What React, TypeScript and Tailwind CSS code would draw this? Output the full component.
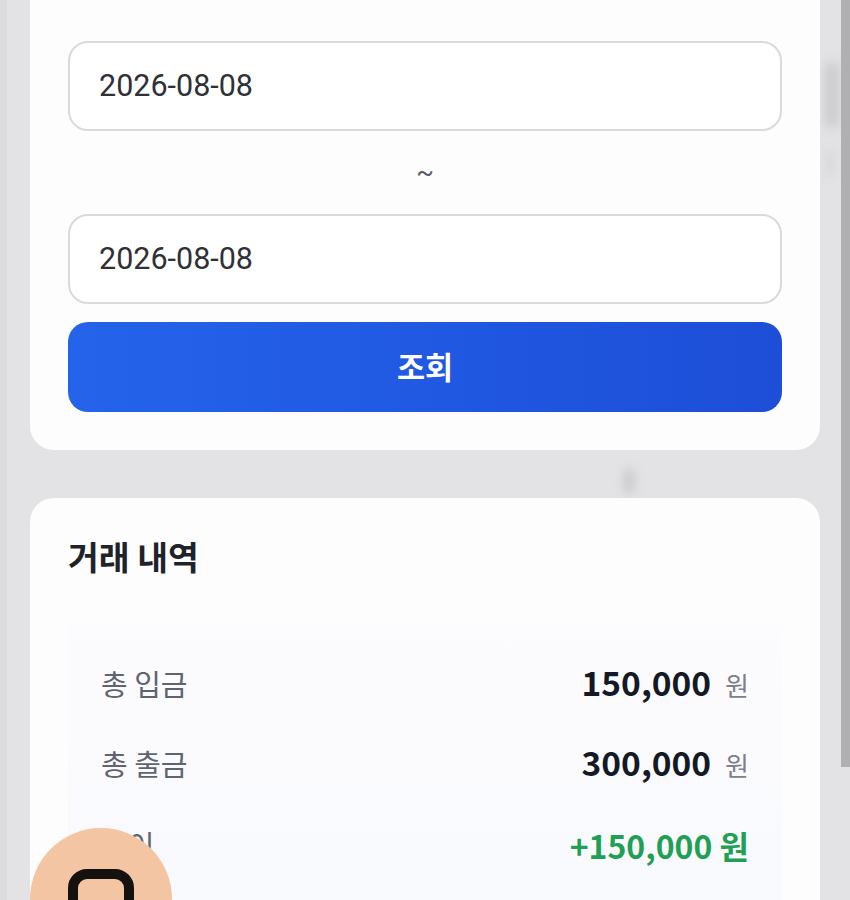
const cjk = "font-['Noto_Sans_CJK_KR','Noto_Sans',sans-serif]";

function DateInput() {
  return (
    <input
      readOnly
      value="2026-08-08"
      className="h-[90px] w-full rounded-[20px] border-2 border-[#d9d9de] bg-white px-[29px] pb-[2px] font-['Roboto',sans-serif] text-[30.5px] text-[#2f3136] outline-none"
    />
  );
}

function Row({ label, amount }: { label: string; amount: string }) {
  return (
    <div className="flex h-[80px] items-center justify-between">
      <span className="text-[29px] text-[#5f6570]">{label}</span>
      <span className="flex items-center gap-[14px]">
        <span className="mb-[3px] text-[33.5px] font-bold text-[#141925]">{amount}</span>
        <span className="text-[26px] text-[#7b808a]">원</span>
      </span>
    </div>
  );
}

export default function App() {
  return (
    <div className={`relative flex h-[900px] overflow-hidden bg-[#e3e3e5] ${cjk}`}>
      <div className="w-[7px] shrink-0 bg-[#dcdcdc]" />

      {/* blurred wallpaper showing through the gutters */}
      <div className="absolute left-[826px] top-[62px] h-[66px] w-[12px] rounded-full bg-[#c6c6c9] blur-[6px]" />
      <div className="absolute left-[826px] top-[150px] h-[26px] w-[8px] rounded-full bg-[#d8d8da] blur-[4px]" />
      <div className="absolute left-[623px] top-[468px] h-[26px] w-[12px] rounded-full bg-[#cdcdcf] blur-[5px]" />

      <main className="relative min-w-0 flex-1 pl-[23px] pr-[21px]">
        <section className="flex flex-col rounded-b-[24px] bg-[#fdfdfe] px-[38px] pb-[38px] pt-[41px]">
          <DateInput />
          <div className="flex h-[83px] items-center justify-center font-['Roboto',sans-serif] text-[26px] text-[#555a63]">
            ~
          </div>
          <DateInput />
          <button className="mt-[18px] h-[90px] rounded-[20px] bg-linear-to-r from-[#2563eb] to-[#1d4ed8] text-[30.5px] font-bold text-white">
            조회
          </button>
        </section>

        <section className="mt-[48px] rounded-t-[24px] bg-[#fdfdfe] px-[38px] pt-[36px]">
          <h2 className="text-[33.5px] leading-[44px] font-bold text-[#1f2329]">거래 내역</h2>
          <div className="mt-[47px] bg-linear-to-b from-[#fcfcfe] to-[#f8f9fd] px-[33px] pt-[19px] pb-[60px]">
            <Row label="총 입금" amount="150,000" />
            <Row label="총 출금" amount="300,000" />
            <div className="flex h-[82px] items-center justify-between">
              <span className="text-[29px] text-[#5f6570]">차이</span>
              <span className="text-[32px] font-semibold text-[#1fa055]">+150,000 원</span>
            </div>
          </div>
        </section>
      </main>

      <div className="relative w-[9px] shrink-0">
        <div className="h-[767px] bg-[#b0b0b2]" />
      </div>

      <div className="absolute left-[30px] top-[828px] flex h-[142px] w-[142px] justify-center rounded-full bg-[#f3c5a3] pt-[41px]">
        <svg width="66" height="70" viewBox="0 0 66 70" fill="none">
          <rect x="5" y="5" width="56" height="70" rx="14" stroke="#15110f" strokeWidth="10" />
        </svg>
      </div>
    </div>
  );
}
